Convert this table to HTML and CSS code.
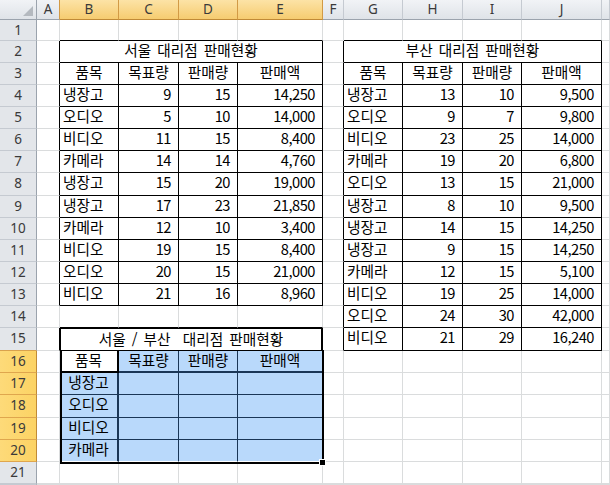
FILE: index.html
```html
<!DOCTYPE html>
<html lang="ko">
<head>
<meta charset="utf-8">
<title>판매현황</title>
<link rel="stylesheet" href="styles.css">
</head>
<body>
<div class="sheet">
<div class="h corner"><i class="tri"></i></div>
<div class="h hl">A</div>
<div class="h hs">B</div>
<div class="h hs">C</div>
<div class="h hs">D</div>
<div class="h hs">E</div>
<div class="h">F</div>
<div class="h">G</div>
<div class="h">H</div>
<div class="h">I</div>
<div class="h">J</div>
<div class="h"></div>

<div class="n">1</div>
<div class="c"></div>
<div class="c xb"></div><div class="c xb"></div><div class="c xb"></div><div class="c xb"></div>
<div class="c"></div>
<div class="c xb"></div><div class="c xb"></div><div class="c xb"></div><div class="c xb"></div>
<div class="c"></div>

<div class="n">2</div>
<div class="c xr"></div>
<div class="c k m t">서울 대리점 판매현황</div>
<div class="c xr"></div>
<div class="c k m t">부산 대리점 판매현황</div>
<div class="c"></div>

<div class="n">3</div>
<div class="c xr"></div>
<div class="c k m">품목</div><div class="c k m">목표량</div><div class="c k m">판매량</div><div class="c k m">판매액</div>
<div class="c xr"></div>
<div class="c k m">품목</div><div class="c k m">목표량</div><div class="c k m">판매량</div><div class="c k m">판매액</div>
<div class="c"></div>

<div class="n">4</div>
<div class="c xr"></div>
<div class="c k">냉장고</div><div class="c k r">9</div><div class="c k r">15</div><div class="c k r">14,250</div>
<div class="c xr"></div>
<div class="c k">냉장고</div><div class="c k r">13</div><div class="c k r">10</div><div class="c k r">9,500</div>
<div class="c"></div>

<div class="n">5</div>
<div class="c xr"></div>
<div class="c k">오디오</div><div class="c k r">5</div><div class="c k r">10</div><div class="c k r">14,000</div>
<div class="c xr"></div>
<div class="c k">오디오</div><div class="c k r">9</div><div class="c k r">7</div><div class="c k r">9,800</div>
<div class="c"></div>

<div class="n">6</div>
<div class="c xr"></div>
<div class="c k">비디오</div><div class="c k r">11</div><div class="c k r">15</div><div class="c k r">8,400</div>
<div class="c xr"></div>
<div class="c k">비디오</div><div class="c k r">23</div><div class="c k r">25</div><div class="c k r">14,000</div>
<div class="c"></div>

<div class="n">7</div>
<div class="c xr"></div>
<div class="c k">카메라</div><div class="c k r">14</div><div class="c k r">14</div><div class="c k r">4,760</div>
<div class="c xr"></div>
<div class="c k">카메라</div><div class="c k r">19</div><div class="c k r">20</div><div class="c k r">6,800</div>
<div class="c"></div>

<div class="n">8</div>
<div class="c xr"></div>
<div class="c k">냉장고</div><div class="c k r">15</div><div class="c k r">20</div><div class="c k r">19,000</div>
<div class="c xr"></div>
<div class="c k">오디오</div><div class="c k r">13</div><div class="c k r">15</div><div class="c k r">21,000</div>
<div class="c"></div>

<div class="n">9</div>
<div class="c xr"></div>
<div class="c k">냉장고</div><div class="c k r">17</div><div class="c k r">23</div><div class="c k r">21,850</div>
<div class="c xr"></div>
<div class="c k">냉장고</div><div class="c k r">8</div><div class="c k r">10</div><div class="c k r">9,500</div>
<div class="c"></div>

<div class="n">10</div>
<div class="c xr"></div>
<div class="c k">카메라</div><div class="c k r">12</div><div class="c k r">10</div><div class="c k r">3,400</div>
<div class="c xr"></div>
<div class="c k">냉장고</div><div class="c k r">14</div><div class="c k r">15</div><div class="c k r">14,250</div>
<div class="c"></div>

<div class="n">11</div>
<div class="c xr"></div>
<div class="c k">비디오</div><div class="c k r">19</div><div class="c k r">15</div><div class="c k r">8,400</div>
<div class="c xr"></div>
<div class="c k">냉장고</div><div class="c k r">9</div><div class="c k r">15</div><div class="c k r">14,250</div>
<div class="c"></div>

<div class="n">12</div>
<div class="c xr"></div>
<div class="c k">오디오</div><div class="c k r">20</div><div class="c k r">15</div><div class="c k r">21,000</div>
<div class="c xr"></div>
<div class="c k">카메라</div><div class="c k r">12</div><div class="c k r">15</div><div class="c k r">5,100</div>
<div class="c"></div>

<div class="n">13</div>
<div class="c xr"></div>
<div class="c k">비디오</div><div class="c k r">21</div><div class="c k r">16</div><div class="c k r">8,960</div>
<div class="c xr"></div>
<div class="c k">비디오</div><div class="c k r">19</div><div class="c k r">25</div><div class="c k r">14,000</div>
<div class="c"></div>

<div class="n">14</div>
<div class="c"></div>
<div class="c xb"></div><div class="c xb"></div><div class="c xb"></div><div class="c xb"></div>
<div class="c xr"></div>
<div class="c k">오디오</div><div class="c k r">24</div><div class="c k r">30</div><div class="c k r">42,000</div>
<div class="c"></div>

<div class="n nl">15</div>
<div class="c xr"></div>
<div class="c m t ti">서울 / 부산  대리점 판매현황</div>
<div class="c xr"></div>
<div class="c k">비디오</div><div class="c k r">21</div><div class="c k r">29</div><div class="c k r">16,240</div>
<div class="c"></div>

<div class="n ns">16</div>
<div class="c"></div>
<div class="c m s0">품목</div><div class="c m sel hd">목표량</div><div class="c m sel hd">판매량</div><div class="c m sel hd">판매액</div>
<div class="c"></div><div class="c"></div><div class="c"></div><div class="c"></div><div class="c"></div><div class="c"></div>

<div class="n ns">17</div>
<div class="c"></div>
<div class="c m sel sb">냉장고</div><div class="c sel"></div><div class="c sel"></div><div class="c sel"></div>
<div class="c"></div><div class="c"></div><div class="c"></div><div class="c"></div><div class="c"></div><div class="c"></div>

<div class="n ns">18</div>
<div class="c"></div>
<div class="c m sel sb">오디오</div><div class="c sel"></div><div class="c sel"></div><div class="c sel"></div>
<div class="c"></div><div class="c"></div><div class="c"></div><div class="c"></div><div class="c"></div><div class="c"></div>

<div class="n ns">19</div>
<div class="c"></div>
<div class="c m sel sb">비디오</div><div class="c sel"></div><div class="c sel"></div><div class="c sel"></div>
<div class="c"></div><div class="c"></div><div class="c"></div><div class="c"></div><div class="c"></div><div class="c"></div>

<div class="n ns">20</div>
<div class="c"></div>
<div class="c m sel sb lr">카메라</div><div class="c sel lr"></div><div class="c sel lr"></div><div class="c sel lr"></div>
<div class="c"></div><div class="c"></div><div class="c"></div><div class="c"></div><div class="c"></div><div class="c"></div>

<div class="n">21</div>
<div class="c"></div><div class="c"></div><div class="c"></div><div class="c"></div><div class="c"></div><div class="c"></div>
<div class="c"></div><div class="c"></div><div class="c"></div><div class="c"></div><div class="c"></div>

<div class="n"></div>
<div class="c"></div><div class="c"></div><div class="c"></div><div class="c"></div><div class="c"></div><div class="c"></div>
<div class="c"></div><div class="c"></div><div class="c"></div><div class="c"></div><div class="c"></div>

<div class="selbox"><i class="handle"></i></div>
</div>
</body>
</html>
```

FILE: styles.css
```css
* {
  box-sizing: border-box;
  margin: 0;
  padding: 0;
}

html,
body {
  width: 610px;
  height: 485px;
  overflow: hidden;
  background: #ffffff;
}

.sheet {
  position: relative;
  display: grid;
  grid-template-columns: 37px 23px 59px 60px 59px 85px 21px 59px 60px 59px 80px 1fr;
  grid-template-rows: 20px 21px 22px 22px 22px 22px 22px 22px 23px 22px 22px 22px 22px 22px 22px 23px 22px 22px 23px 22px 22px 22px 1fr;
  width: 610px;
  height: 485px;
  font-family: "Noto Sans CJK KR", sans-serif;
}

/* column headers */
.h {
  background: linear-gradient(#f1f3f6, #dfe3e8);
  border-right: 1px solid #c5cad1;
  border-bottom: 1px solid #9ba3ad;
  font: 13.5px/19px "Noto Sans", "Noto Sans CJK KR", sans-serif;
  color: #3a3a3a;
  text-align: center;
}

.hl {
  border-right-color: #d29a45;
}

.hs {
  background: linear-gradient(#fce3a6, #f6cc70);
  border-right-color: #d29a45;
  border-bottom-color: #c08a36;
}

.corner {
  display: flex;
  justify-content: flex-end;
  align-items: flex-end;
  padding: 0 3px 3px 0;
  border-right-color: #9ba3ad;
}

.tri {
  display: block;
  width: 0;
  height: 0;
  border-left: 10px solid transparent;
  border-bottom: 10px solid #b4b9bf;
}

/* row headers */
.n {
  background: #e3e6ea;
  border-right: 1px solid #9ba3ad;
  border-bottom: 1px solid #c5cad1;
  font: 13.5px/20px "Noto Sans", "Noto Sans CJK KR", sans-serif;
  color: #3a3a3a;
  text-align: center;
}

.nl {
  border-bottom-color: #d9a24d;
}

.ns {
  background: linear-gradient(90deg, #fdda79, #fcd364);
  border-right-color: #c08a36;
  border-bottom-color: #dfa64d;
}

/* cells */
.c {
  border-right: 1px solid #dadcdd;
  border-bottom: 1px solid #dadcdd;
  font-size: 14.67px;
  line-height: 18px;
  white-space: pre;
  word-spacing: 2px;
  color: #000000;
  padding: 0 3px;
}

.xr {
  border-right-color: #000000;
}

.xb {
  border-bottom-color: #000000;
}

.k {
  border-right-color: #000000;
  border-bottom-color: #000000;
}

.t {
  grid-column: span 4;
}

.m {
  text-align: center;
}

.r {
  text-align: right;
  padding-right: 7px;
  letter-spacing: -0.5px;
}

.ti {
  border-top: 1px solid #000000;
  border-left: 1px solid #000000;
  border-right: 2px solid #000000;
  border-bottom-color: #000000;
  padding-top: 1px;
}

/* selection range */
.sel {
  background: #b9d9fb;
  border-right-color: #1a3656;
  border-bottom-color: #1a3656;
}

.s0 {
  border-right: 2px solid #000000;
  border-bottom: 2px solid #000000;
}

.hd {
  border-bottom-width: 2px;
}

.sb {
  border-right-width: 2px;
}

.lr {
  border-bottom-color: #ffffff;
}

.selbox {
  position: absolute;
  grid-row: 17 / 22;
  grid-column: 3 / 7;
  top: -1px;
  left: 0;
  right: -1px;
  bottom: -2px;
  border: 2px solid #000000;
  border-top-width: 1px;
  pointer-events: none;
}

.handle {
  position: absolute;
  right: -4px;
  bottom: -4px;
  width: 7px;
  height: 7px;
  background: #000000;
  border: 1px solid #ffffff;
}
```
